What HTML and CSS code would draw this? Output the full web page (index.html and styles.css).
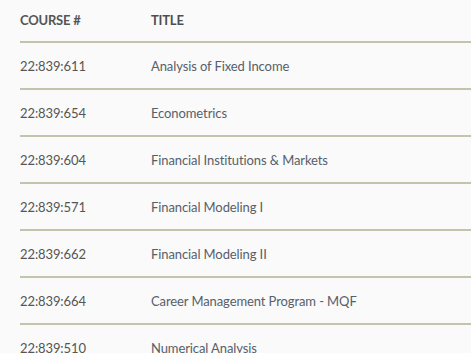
FILE: index.html
```html
<!DOCTYPE html>
<html lang="en">
<head>
<meta charset="utf-8">
<title>Courses</title>
<link rel="stylesheet" href="styles.css">
</head>
<body>
<div class="wrap">
  <table class="courses">
    <thead>
      <tr><th class="num">COURSE #</th><th class="title">TITLE</th></tr>
    </thead>
    <tbody>
      <tr><td class="num">22:839:611</td><td class="title">Analysis of Fixed Income</td></tr>
      <tr><td class="num">22:839:654</td><td class="title">Econometrics</td></tr>
      <tr><td class="num">22:839:604</td><td class="title">Financial Institutions &amp; Markets</td></tr>
      <tr><td class="num">22:839:571</td><td class="title">Financial Modeling I</td></tr>
      <tr><td class="num">22:839:662</td><td class="title">Financial Modeling II</td></tr>
      <tr><td class="num">22:839:664</td><td class="title">Career Management Program - MQF</td></tr>
      <tr><td class="num">22:839:510</td><td class="title">Numerical Analysis</td></tr>
    </tbody>
  </table>
</div>
</body>
</html>
```
FILE: styles.css
```css
html, body {
  margin: 0;
  padding: 0;
  background: #fafafa;
  overflow: hidden;
}
.wrap {
  padding-left: 20px;
}
.courses {
  border-collapse: collapse;
  width: 480px;
  font-family: Lato, "Liberation Sans", sans-serif;
  font-size: 13px;
  letter-spacing: -0.1px;
}
.courses th {
  text-align: left;
  font-weight: 700;
  color: #4f4f4f;
  height: 42px;
  padding: 0 0 2px 0;
  vertical-align: middle;
  border-bottom: 2px solid #c5c3ab;
  box-sizing: border-box;
  letter-spacing: -0.2px;
}
.courses td {
  height: 47px;
  padding: 0;
  vertical-align: middle;
  border-bottom: 2px solid #c5c3ab;
  box-sizing: border-box;
}
.courses .num {
  width: 131px;
  color: #555555;
}
.courses td.title {
  color: #56606a;
}
```
